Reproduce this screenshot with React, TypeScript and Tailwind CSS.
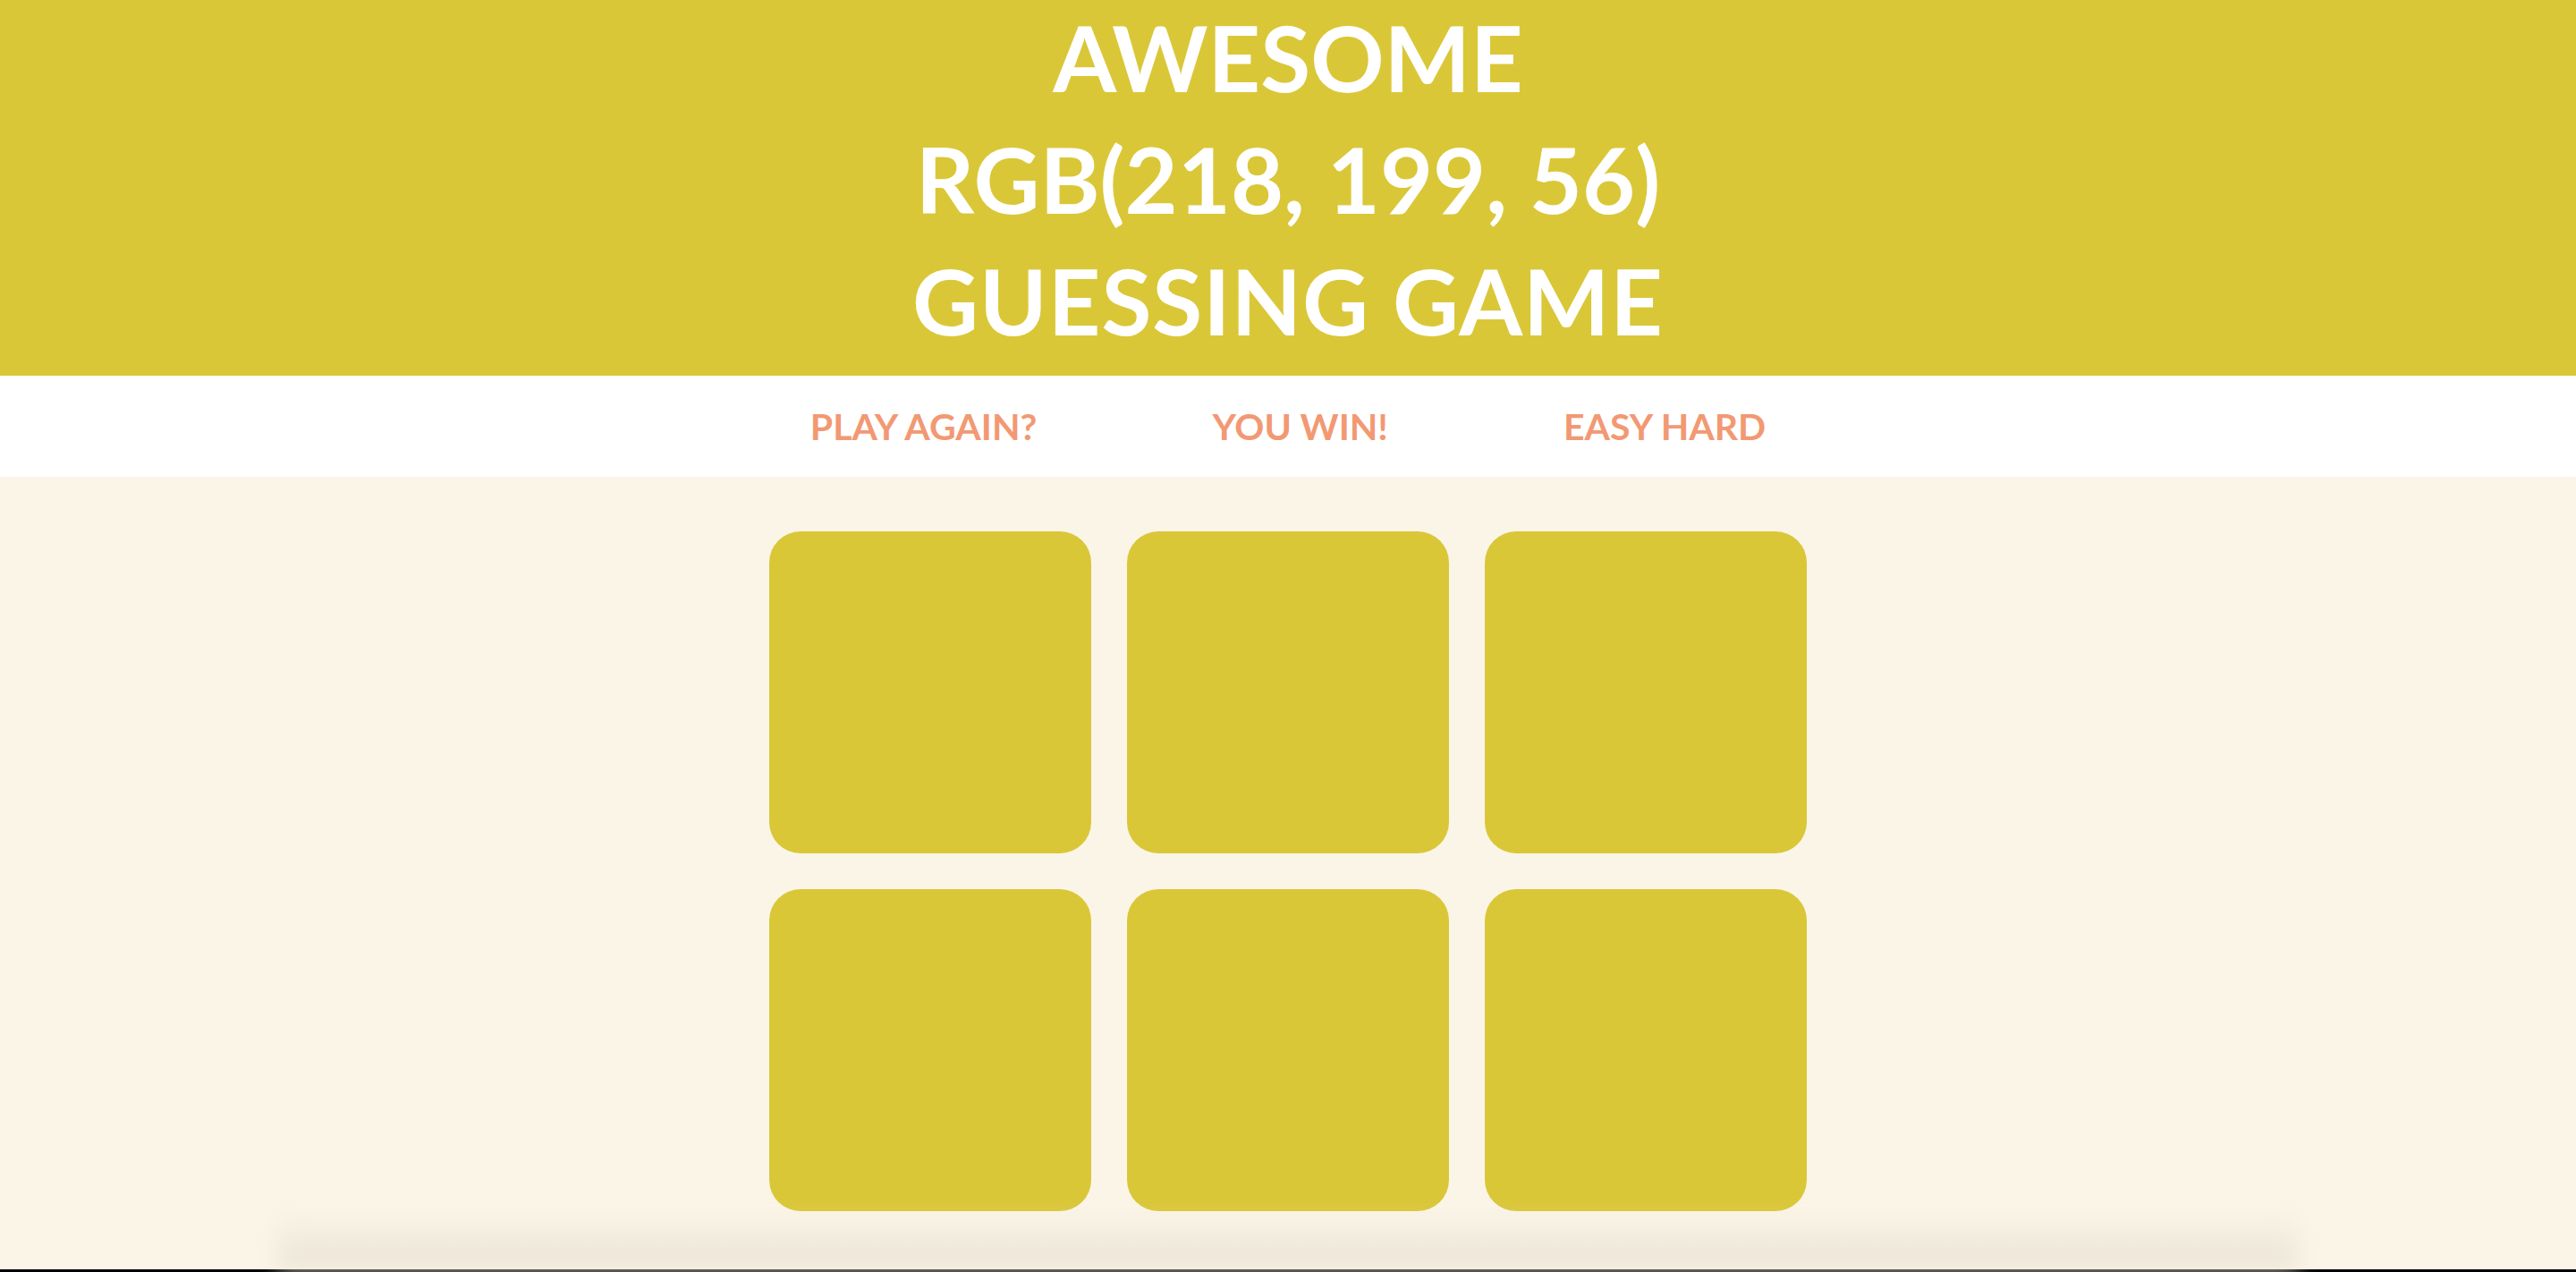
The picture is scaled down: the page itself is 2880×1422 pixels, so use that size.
const squares = ["a", "b", "c", "d", "e", "f"];

export default function App() {
  return (
    <div className="min-h-screen flex flex-col bg-[#fbf5e8] font-['Lato',sans-serif]">
      <header className="bg-[#dac738] h-[420px] pb-[20px] flex flex-col items-center justify-center text-white font-bold text-[102px] leading-[136px] uppercase">
        <span>Awesome</span>
        <span>RGB(218, 199, 56)</span>
        <span className="tracking-[1px]">Guessing Game</span>
      </header>

      <nav className="bg-white h-[113px] flex items-center justify-center gap-[196px] text-[#f29973] font-bold text-[41px] uppercase">
        <span>Play Again?</span>
        <span>You Win!</span>
        <span>
          Easy <span>Hard</span>
        </span>
      </nav>

      <main className="flex-1 flex flex-col items-center pt-[61px]">
        <div className="grid grid-cols-3 gap-[40px]">
          {squares.map((s) => (
            <div key={s} className="w-[360px] h-[360px] rounded-[35px] bg-[#dac738]" />
          ))}
        </div>
        <div className="mt-auto w-[2260px] h-[64px] bg-gradient-to-b from-transparent to-[#e9e2d4] blur-md" />
      </main>
      <div className="h-[3px] bg-black" />
    </div>
  );
}
